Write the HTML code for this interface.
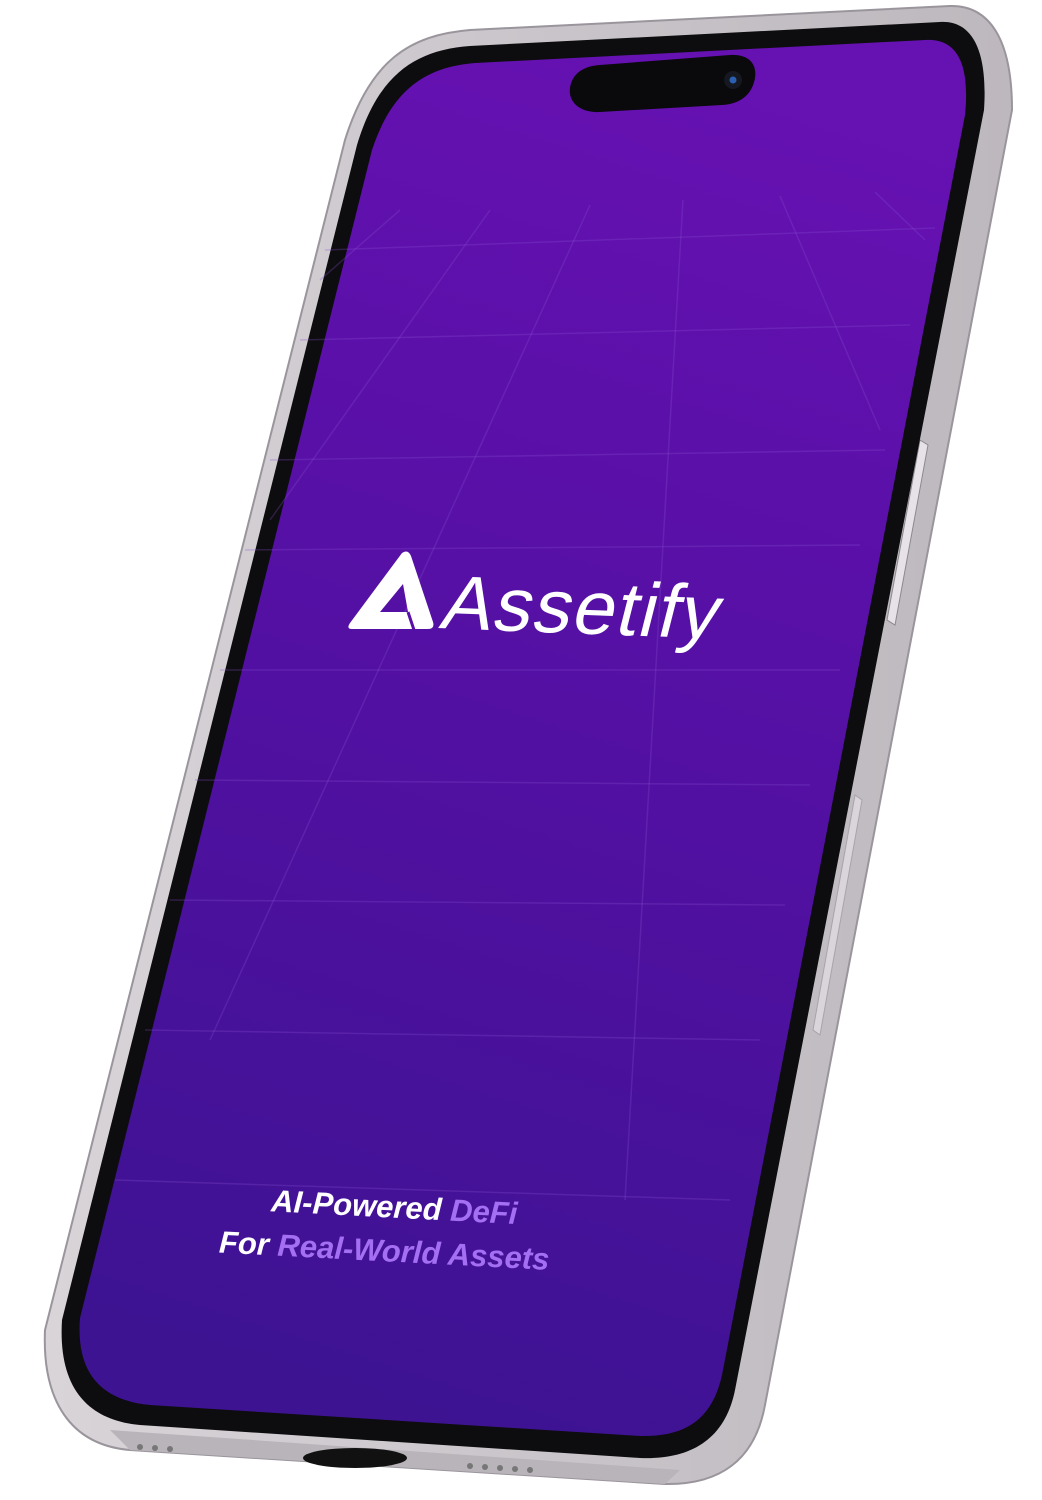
<!DOCTYPE html>
<html><head><meta charset="utf-8"><style>
html,body{margin:0;padding:0;background:#fff;width:1042px;height:1500px;overflow:hidden}
svg{display:block}
</style></head><body>
<svg width="1042" height="1500" viewBox="0 0 1042 1500" xmlns="http://www.w3.org/2000/svg">
<defs>
<linearGradient id="scr" x1="0.6" y1="0" x2="0.4" y2="1">
<stop offset="0" stop-color="#6611b2"/>
<stop offset="0.5" stop-color="#5210a2"/>
<stop offset="1" stop-color="#3d1392"/>
</linearGradient>
<linearGradient id="silver" x1="0" y1="0" x2="1" y2="0">
<stop offset="0" stop-color="#d8d4d8"/>
<stop offset="0.5" stop-color="#c9c5ca"/>
<stop offset="1" stop-color="#bdb8bd"/>
</linearGradient>
</defs>
<path d="M345,140 C370,60 410,35 470,30 L950,6 C990,5 1012,40 1012,110 L765,1405 C755,1460 720,1485 665,1484 L130,1450 C70,1445 42,1400 45,1330 Z" fill="url(#silver)" stroke="#9a959c" stroke-width="2"/>
<path d="M920,440 L928,445 L895,625 L887,620 Z" fill="#e6e2e7" stroke="#8d888f"/>
<path d="M855,795 L862,800 L820,1035 L813,1030 Z" fill="#d9d5da" stroke="#a8a3aa"/>
<path d="M110,1430 L680,1470 L665,1484 L130,1450 Z" fill="#b8b4b9"/>
<ellipse cx="355" cy="1458" rx="52" ry="10" fill="#111"/>
<g fill="#777"><circle cx="140" cy="1447" r="3"/><circle cx="155" cy="1448" r="3"/><circle cx="170" cy="1449" r="3"/>
<circle cx="470" cy="1466" r="3"/><circle cx="485" cy="1467" r="3"/><circle cx="500" cy="1468" r="3"/><circle cx="515" cy="1469" r="3"/><circle cx="530" cy="1470" r="3"/></g>
<path d="M357,145 C378,75 415,50 470,46 L940,22 C972,20 988,50 984,110 L735,1390 C725,1440 690,1460 640,1458 L140,1425 C85,1420 58,1385 62,1320 Z" fill="#0d0c0e"/>
<path d="M372,150 C392,90 425,67 475,63 L925,40 C958,38 970,65 965,115 L722,1375 C712,1420 685,1437 640,1436 L150,1405 C98,1400 76,1370 80,1318 Z" fill="url(#scr)"/>
<g stroke="#8a4fd0" stroke-opacity="0.28" stroke-width="1.5" fill="none">
<path d="M325,250 L935,228"/><path d="M300,340 L910,325"/><path d="M270,460 L885,450"/><path d="M245,550 L860,545"/><path d="M220,670 L840,670"/><path d="M195,780 L810,785"/><path d="M170,900 L785,905"/><path d="M145,1030 L760,1040"/><path d="M115,1180 L730,1200"/>
<path d="M400,210 L320,280"/><path d="M490,210 L270,520"/><path d="M590,205 L210,1040"/><path d="M683,200 L625,1200"/><path d="M780,196 L880,430"/><path d="M875,192 L925,240"/>
</g>
<path d="M600,65 L730,55 C750,54 757,65 755,78 C752,95 740,104 722,105 L600,112 C580,113 568,102 570,88 C572,74 583,66 600,65 Z" fill="#0a090b"/>
<circle cx="733" cy="80" r="9" fill="#151820"/><circle cx="733" cy="80" r="3.5" fill="#2b5fb0"/>
<!-- logo -->
<path fill-rule="evenodd" fill="#fff" d="M402,553 Q408,549 411,556 L433,622 Q435,629 428,629 L352,629 Q346,629 350,623 Z M380,612 L403,584 L408,612 Z"/>
<path d="M408,612 L414,630" stroke="#5a10a8" stroke-width="3"/>
<g transform="translate(438,628) rotate(2.2) skewX(-12)">
<text x="0" y="0" font-family="Liberation Sans, sans-serif" font-size="76" fill="#fff" letter-spacing="1.5">Assetify</text>
</g>
<g transform="rotate(3 400 1230)" font-family="Liberation Sans, sans-serif" font-size="31" font-weight="bold" font-style="italic">
<text x="270" y="1218" fill="#fff">AI-Powered <tspan fill="#a46ff2">DeFi</tspan></text>
<text x="220" y="1262" fill="#fff">For <tspan fill="#a46ff2">Real-World Assets</tspan></text>
</g>
</svg>
</body></html>
